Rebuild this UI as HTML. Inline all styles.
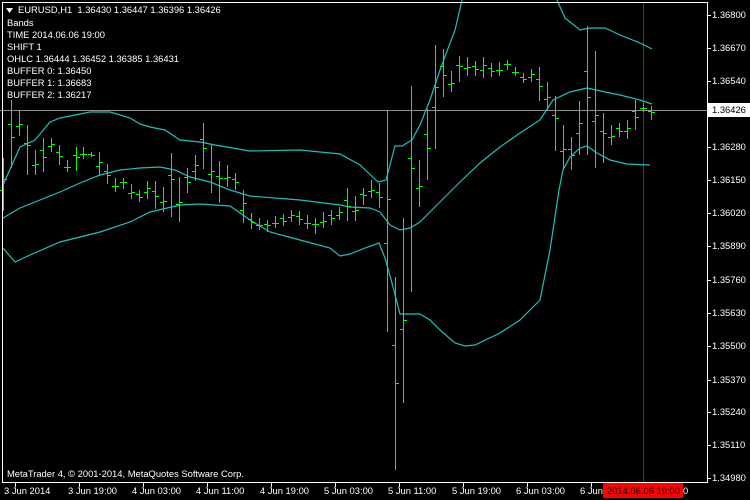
<!DOCTYPE html>
<html><head><meta charset="utf-8">
<style>
html,body{margin:0;padding:0;background:#000;}
#w{position:relative;width:750px;height:500px;overflow:hidden;background:#000;font-family:"Liberation Sans","DejaVu Sans",sans-serif;font-size:9.4px;color:#fff;}
.t{position:absolute;white-space:nowrap;line-height:12px;}
svg{position:absolute;left:0;top:0;}
</style></head><body>
<div id="w">
<svg id="s" width="750" height="500">
<rect x="0" y="110" width="707" height="1" fill="#909090"/>
<rect x="643" y="2" width="1" height="480" fill="#d00000"/>
<g fill="none" stroke="#20c0b8" stroke-width="1.2">
<polyline points="3,185 20,147 35,140 50,122 60,118 90,112 110,112 130,118 140,124 150,127 165,130 180,140 200,142 215,145 250,151 300,150 340,154 360,165 378,182 386,180 395,146 402,146 412,140 420,125 430,100 440,70 455,30 462,0"/>
<polyline points="557,0 565,18 580,30 590,28 605,28 620,35 640,43 652,49"/>
<polyline points="3,218 20,208 40,200 60,192 80,183 100,175 120,170 140,168 160,167 175,170 190,177 210,182 230,190 250,196 300,200 340,205 350,207 370,208 380,212 390,225 400,230 410,228 420,222 440,202 460,182 480,163 500,147 520,133 540,120 553,100 570,92 587,88 605,92 620,95 640,100 652,104"/>
<polyline points="3,248 15,262 30,255 60,242 100,232 130,222 150,212 180,205 200,204 230,206 250,220 270,232 300,240 330,248 340,256 350,254 365,248 379,243 385,258 392,283 400,314 420,314 430,320 440,330 455,343 465,346 475,345 500,333 520,320 540,300 550,250 559,190 563,170 570,157 580,148 587,146 597,153 610,160 627,164 650,165"/>
</g>
<g id="bars" fill="#00ff00"></g>
<rect x="2.5" y="2.5" width="705" height="480" fill="none" stroke="#fff"/>
<g id="ticks" fill="#fff"></g>
<rect x="708" y="103" width="42" height="14" fill="#fff"/>
<rect x="603" y="483" width="80" height="15" fill="#ff0000"/>
</svg>
<div class="t" style="left:18px;top:4px">EURUSD,H1&nbsp; 1.36430 1.36447 1.36396 1.36426</div>
<svg width="10" height="10" style="left:5px;top:6px"><polygon points="1,2 8,2 4.5,7" fill="#fff"/></svg>
<div class="t" style="left:7px;top:17px">Bands</div>
<div class="t" style="left:7px;top:29px">TIME 2014.06.06 19:00</div>
<div class="t" style="left:7px;top:41px">SHIFT 1</div>
<div class="t" style="left:7px;top:53px">OHLC 1.36444 1.36452 1.36385 1.36431</div>
<div class="t" style="left:7px;top:65px">BUFFER 0: 1.36450</div>
<div class="t" style="left:7px;top:77px">BUFFER 1: 1.36683</div>
<div class="t" style="left:7px;top:89px">BUFFER 2: 1.36217</div>
<div class="t" style="left:7px;top:468px">MetaTrader 4, © 2001-2014, MetaQuotes Software Corp.</div>
<div id="lab"></div>
<div class="t" style="left:712px;top:104px;color:#000">1.36426</div>
<div class="t" style="left:607px;top:485px;color:#000">2014.06.06 19:00</div>
<div class="t" style="left:683px;top:485px">0</div>
</div>
<script>
var B=[[3,158,211],[11,100,168],[19,110,136],[27,125,175],[35,150,175],[43,138,172],[51,138,152],[59,145,165],[67,160,172],[76,147,171],[83,147,159],[91,152,157],[99,152,176],[107,164,184],[115,178,192],[123,178,189],[131,184,199],[139,190,202],[147,181,199],[155,181,209],[163,187,212],[171,153,217],[179,177,222],[187,168,193],[195,155,181],[203,123,169],[211,145,193],[219,161,203],[227,165,187],[235,173,190],[243,190,223],[251,213,229],[259,218,230],[267,220,232],[275,216,228],[283,214,226],[291,210,222],[299,211,225],[307,215,229],[315,218,234],[323,212,228],[331,210,225],[339,207,220],[347,188,221],[355,196,221],[363,188,205],[371,180,198],[379,183,208],[387,110,332],[395,277,470],[403,218,403],[411,86,292],[419,160,207],[427,109,180],[435,45,149],[443,49,97],[451,71,92],[459,56,82],[467,57,76],[475,61,76],[483,57,78],[491,63,77],[499,62,76],[507,60,70],[515,67,76],[523,73,83],[531,69,82],[539,67,101],[547,82,110],[555,96,151],[563,125,169],[571,137,170],[579,101,155],[587,26,155],[595,51,168],[603,113,163],[611,125,145],[619,123,137],[627,120,139],[635,100,130],[643,103,112],[651,106,120]];
var NS='http://www.w3.org/2000/svg';
function R(p,x,y,w,h){var r=document.createElementNS(NS,'rect');r.setAttribute('x',x);r.setAttribute('y',y);r.setAttribute('width',w);r.setAttribute('height',h);p.appendChild(r);}
var g=document.getElementById('bars');
B.forEach(function(b,i){var x=b[0],hi=b[1],lo=b[2],r=lo-hi;
var o=Math.round(hi+r*(i%2?0.35:0.6)),c=Math.round(hi+r*(i%3?0.55:0.4));
R(g,x,hi,1,r);R(g,x-3,o,3,1);R(g,x+1,c,3,1);});
var P=[["1.36800",15],["1.36670",48],["1.36540",81],["1.36280",147],["1.36150",180],["1.36020",213],["1.35890",246],["1.35760",280],["1.35630",313],["1.35500",346],["1.35370",380],["1.35240",412],["1.35110",445],["1.34980",478]];
var T=["3 Jun 2014","3 Jun 19:00","4 Jun 03:00","4 Jun 11:00","4 Jun 19:00","5 Jun 03:00","5 Jun 11:00","5 Jun 19:00","6 Jun 03:00","6 Jun"];
var L='',tk=document.getElementById('ticks');
P.forEach(function(p){L+='<div class="t" style="left:712px;top:'+(p[1]-6)+'px">'+p[0]+'</div>';R(tk,707,p[1],4,1);});
T.forEach(function(t,i){var x=3+64*i;L+='<div class="t" style="left:'+(x+1)+'px;top:485px">'+t+'</div>';R(tk,x+12,482,1,5);});
R(tk,707,110,4,1);
document.getElementById('lab').innerHTML=L;
</script>
</body></html>
